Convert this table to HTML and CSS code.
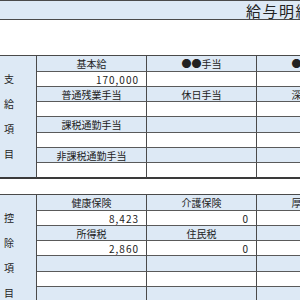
FILE: index.html
```html
<!DOCTYPE html>
<html lang="ja">
<head>
<meta charset="utf-8">
<title>給与明細</title>
<link rel="stylesheet" href="styles.css">
</head>
<body>
<div class="sheet">
  <header class="title-bar"><h1 class="title">給与明細</h1></header>
  <div class="spacer"></div>

  <section class="block">
    <div class="side"><span>支</span><span>給</span><span>項</span><span>目</span></div>

    <div class="cell head">基本給</div>
    <div class="cell head">●●手当</div>
    <div class="cell head">●●手当</div>
    <div class="cell value">170,000</div>
    <div class="cell value"></div>
    <div class="cell value"></div>

    <div class="cell head">普通残業手当</div>
    <div class="cell head">休日手当</div>
    <div class="cell head">深夜手当</div>
    <div class="cell value"></div>
    <div class="cell value"></div>
    <div class="cell value"></div>

    <div class="cell head">課税通勤手当</div>
    <div class="cell head"></div>
    <div class="cell head"></div>
    <div class="cell value"></div>
    <div class="cell value"></div>
    <div class="cell value"></div>

    <div class="cell head">非課税通勤手当</div>
    <div class="cell head"></div>
    <div class="cell head"></div>
    <div class="cell value last"></div>
    <div class="cell value last"></div>
    <div class="cell value last"></div>
  </section>

  <section class="block">
    <div class="side"><span>控</span><span>除</span><span>項</span><span>目</span></div>

    <div class="cell head">健康保険</div>
    <div class="cell head">介護保険</div>
    <div class="cell head">厚生年金</div>
    <div class="cell value">8,423</div>
    <div class="cell value">0</div>
    <div class="cell value"></div>

    <div class="cell head">所得税</div>
    <div class="cell head">住民税</div>
    <div class="cell head"></div>
    <div class="cell value">2,860</div>
    <div class="cell value">0</div>
    <div class="cell value"></div>

    <div class="cell head"></div>
    <div class="cell head"></div>
    <div class="cell head"></div>
    <div class="cell value"></div>
    <div class="cell value"></div>
    <div class="cell value"></div>

    <div class="cell head"></div>
    <div class="cell head"></div>
    <div class="cell head"></div>
    <div class="cell value last"></div>
    <div class="cell value last"></div>
    <div class="cell value last"></div>
  </section>
</div>
</body>
</html>
```

FILE: styles.css
```css
html, body {
  margin: 0;
  padding: 0;
  overflow: hidden;
  background: #ffffff;
}

body {
  font-family: "Noto Sans CJK JP", "Noto Sans", sans-serif;
  color: #222222;
}

.sheet {
  width: 480px;
}

/* title band */
.title-bar {
  box-sizing: border-box;
  height: 20px;
  border-top: 1px solid #4a4a4a;
  border-bottom: 1px solid #4a4a4a;
  background: #dde9f5;
  display: flex;
  align-items: flex-end;
  padding-left: 246px;
}

.title {
  margin: 0;
  font-size: 15px;
  font-weight: normal;
  line-height: 16px;
  letter-spacing: 1.5px;
  white-space: nowrap;
}

.spacer {
  height: 35px;
}

/* one ledger block: side label + 3 columns x 8 rows */
.block {
  display: grid;
  grid-template-columns: 37px 110px 110px 110px;
  grid-template-rows: 16px 15px 15px 15px 16px 15px 15px 16px;
  border-top: 1px solid #4a4a4a;
  margin-bottom: 15px;
}

.side {
  grid-row: 1 / -1;
  grid-column: 1;
  box-sizing: border-box;
  background: #dde9f5;
  border-right: 1px solid #4a4a4a;
  border-bottom: 2px solid #3a3a3a;
  display: flex;
  flex-direction: column;
  justify-content: center;
  align-items: flex-start;
  gap: 13px;
  padding-left: 4px;
  font-size: 10px;
  line-height: 12px;
}

.cell {
  box-sizing: border-box;
  border-right: 1px solid #4a4a4a;
  border-bottom: 1px solid #5a5a5a;
  font-size: 10px;
  line-height: 13px;
  display: flex;
  align-items: center;
  white-space: nowrap;
  overflow: hidden;
}

.head {
  background: #dde9f5;
  justify-content: center;
}

.value {
  background: #ffffff;
  justify-content: flex-end;
  padding-right: 7px;
  letter-spacing: 1px;
}

.last {
  border-bottom: 2px solid #3a3a3a;
}
```
